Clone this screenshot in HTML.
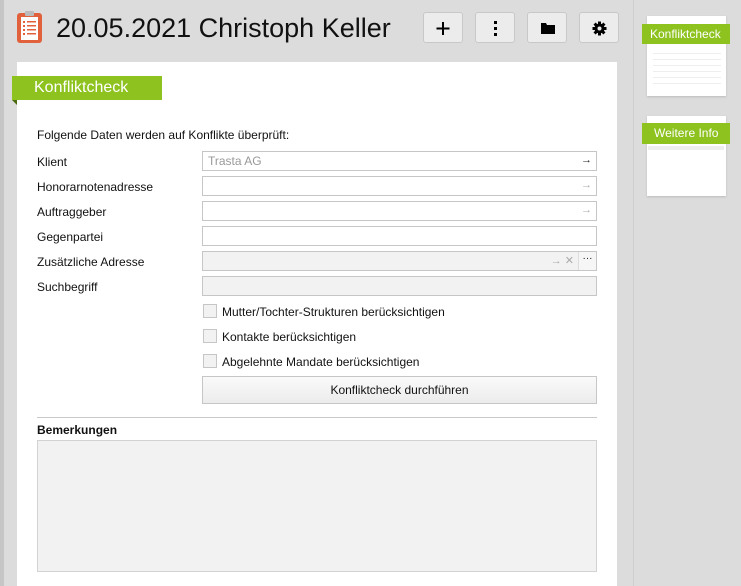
<!DOCTYPE html>
<html><head><meta charset="utf-8"><style>
*{box-sizing:border-box;margin:0;padding:0}
body{width:741px;height:586px;overflow:hidden;background:#dcdcdc;font-family:"Segoe UI","Liberation Sans",sans-serif;font-size:12px;color:#111;position:relative}
.a{position:absolute}
.btn{position:absolute;top:12px;width:40px;height:31px;background:#ececec;border:1px solid #c8c8c8;border-radius:3px}
.lbl{position:absolute;left:37px;font-size:12px}
.f{position:absolute;left:202px;width:395px;height:20px;border:1px solid #c6c6c6;background:#fff}
.f.g{background:#f2f2f2}
.arr{position:absolute;right:4px;top:2px;font-size:11px;color:#aaa}
.cb{position:absolute;left:203px;width:14px;height:14px;border:1px solid #c6c6c6;background:#f2f2f2}
.cl{position:absolute;left:222px;font-size:12px}
.tag{position:absolute;background:#8dc21f;color:#fff}
</style></head><body>
<div class="a" style="left:0;top:0;width:4px;height:586px;background:#c6c6c6"></div>
<div class="a" style="left:633px;top:0;width:1px;height:586px;background:#cfcfcf"></div>
<svg class="a" style="left:16px;top:10px" width="28" height="34" viewBox="0 0 28 34">
<rect x="1" y="3" width="25" height="30" rx="3" fill="#e0613b"/>
<rect x="5" y="7" width="17" height="23" fill="#fff"/>
<rect x="9" y="1" width="9" height="5" rx="1" fill="#bbb"/>
<g fill="#e0613b"><rect x="7" y="11" width="2" height="2"/><rect x="7" y="15" width="2" height="2"/><rect x="7" y="19" width="2" height="2"/><rect x="7" y="23" width="2" height="2"/>
<rect x="11" y="11" width="9" height="1.5"/><rect x="11" y="15" width="9" height="1.5"/><rect x="11" y="19" width="9" height="1.5"/><rect x="11" y="23" width="9" height="1.5"/></g></svg>
<div class="a" style="left:56px;top:10px;font-size:27px;color:#111;line-height:36px">20.05.2021 Christoph Keller</div>
<div class="btn" style="left:423px"><svg width="40" height="31"><path d="M19 9v13M12.5 15.5h13" stroke="#000" stroke-width="2"/></svg></div>
<div class="btn" style="left:475px"><svg width="40" height="31"><g fill="#000"><rect x="18" y="8" width="3" height="3"/><rect x="18" y="14" width="3" height="3"/><rect x="18" y="20" width="3" height="3"/></g></svg></div>
<div class="btn" style="left:527px"><svg width="40" height="31"><path d="M13 10h5l1 2h8v9h-14z" fill="#000"/></svg></div>
<div class="btn" style="left:579px"><svg width="40" height="31"><g transform="translate(19.5 15.5)" fill="#000"><circle r="5"/><rect x="-1.5" y="-7" width="3" height="14"/><rect x="-7" y="-1.5" width="14" height="3"/><rect x="-1.5" y="-7" width="3" height="14" transform="rotate(45)"/><rect x="-1.5" y="-7" width="3" height="14" transform="rotate(-45)"/><circle r="2" fill="#ececec"/></g></svg></div>
<div class="a" style="left:17px;top:62px;width:600px;height:524px;background:#fff"></div>
<div class="tag" style="left:12px;top:76px;width:150px;height:24px;font-size:16px;line-height:24px;padding-left:22px">Konfliktcheck</div>
<div class="a" style="left:12px;top:100px;width:0;height:0;border-top:5px solid #4a6a10;border-left:5px solid transparent"></div>
<div class="lbl" style="top:128px">Folgende Daten werden auf Konflikte überprüft:</div>
<div class="lbl" style="top:155px">Klient</div>
<div class="lbl" style="top:180px">Honorarnotenadresse</div>
<div class="lbl" style="top:205px">Auftraggeber</div>
<div class="lbl" style="top:230px">Gegenpartei</div>
<div class="lbl" style="top:255px">Zusätzliche Adresse</div>
<div class="lbl" style="top:280px">Suchbegriff</div>
<div class="f" style="top:151px"><span style="position:absolute;left:5px;top:2px;color:#999">Trasta AG</span><span class="arr" style="color:#222">→</span></div>
<div class="f" style="top:176px"><span class="arr">→</span></div>
<div class="f" style="top:201px"><span class="arr">→</span></div>
<div class="f" style="top:226px"></div>
<div class="f g" style="top:251px"><span class="arr" style="right:22px">→ ✕</span><span style="position:absolute;right:0;top:0;width:18px;height:18px;border-left:1px solid #ddd;background:#f6f6f6;font-size:10px;text-align:center;line-height:14px">···</span></div>
<div class="f g" style="top:276px"></div>
<div class="cb" style="top:304px"></div><div class="cl" style="top:305px">Mutter/Tochter-Strukturen berücksichtigen</div>
<div class="cb" style="top:329px"></div><div class="cl" style="top:330px">Kontakte berücksichtigen</div>
<div class="cb" style="top:354px"></div><div class="cl" style="top:355px">Abgelehnte Mandate berücksichtigen</div>
<div class="a" style="left:202px;top:376px;width:395px;height:28px;border:1px solid #c6c6c6;background:linear-gradient(#fafafa,#ececec);text-align:center;line-height:26px">Konfliktcheck durchführen</div>
<div class="a" style="left:37px;top:417px;width:560px;height:1px;background:#c8c8c8"></div>
<div class="lbl" style="top:423px;font-weight:bold">Bemerkungen</div>
<div class="a" style="left:37px;top:440px;width:560px;height:132px;border:1px solid #d2d2d2;background:#f2f2f2"></div>
<div class="a" style="left:647px;top:16px;width:79px;height:80px;background:#fff;box-shadow:0 1px 2px #bbb"></div>
<div class="a" style="left:653px;top:48px;width:68px;height:40px;background:repeating-linear-gradient(#fff 0 5px,#eee 5px 6px)"></div>
<div class="tag" style="left:642px;top:24px;width:88px;height:20px;font-size:12px;line-height:20px;padding-left:8px">Konfliktcheck</div>
<div class="a" style="left:647px;top:116px;width:79px;height:80px;background:#fff;box-shadow:0 1px 2px #bbb"></div>
<div class="a" style="left:648px;top:146px;width:76px;height:4px;background:#eee"></div>
<div class="tag" style="left:642px;top:123px;width:88px;height:21px;font-size:12px;line-height:21px;padding-left:12px">Weitere Info</div>
</body></html>
